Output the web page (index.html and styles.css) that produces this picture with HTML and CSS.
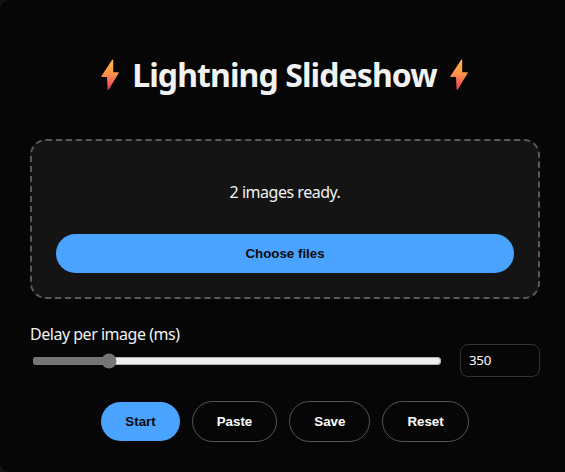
FILE: index.html
```html
<!DOCTYPE html>
<html lang="en">
<head>
<meta charset="utf-8">
<title>Lightning Slideshow</title>
<link rel="stylesheet" href="styles.css">
</head>
<body>
<main class="panel">
  <svg width="0" height="0" class="defs"><defs>
    <linearGradient id="bolt" x1="0" y1="0" x2="0" y2="1"><stop offset="0" stop-color="#ffb84a"/><stop offset=".45" stop-color="#ff9548"/><stop offset="1" stop-color="#ee3d5c"/></linearGradient>
  </defs></svg>
  <h1 class="title">
    <svg class="bolt" viewBox="0 0 18 32"><path fill="url(#bolt)" d="M11.2.7Q12.2.1 12.2 1.2V13.2H17.2Q18.2 13.3 17.6 14.2L7.8 30.5Q6.9 31.3 6.6 30.3L6 18.1H.8Q-.1 17.9.5 17Z"/></svg>
    <span class="title-text">Lightning Slideshow</span>
    <svg class="bolt" viewBox="0 0 18 32"><path fill="url(#bolt)" d="M11.2.7Q12.2.1 12.2 1.2V13.2H17.2Q18.2 13.3 17.6 14.2L7.8 30.5Q6.9 31.3 6.6 30.3L6 18.1H.8Q-.1 17.9.5 17Z"/></svg>
  </h1>
  <section class="drop">
    <p class="status">2 images ready.</p>
    <button class="btn primary">Choose files</button>
  </section>
  <label class="label" for="delay"><span>Delay per image (ms)</span></label>
  <div class="row">
    <input class="range" id="delay" type="range" min="50" max="1770" value="350">
    <input class="number" type="text" value="350">
  </div>
  <div class="actions">
    <button class="btn primary">Start</button>
    <button class="btn ghost">Paste</button>
    <button class="btn ghost">Save</button>
    <button class="btn ghost">Reset</button>
  </div>
</main>
</body>
</html>
```
FILE: styles.css
```css
* { box-sizing: border-box; }
html { background: #111; }
body { margin: 0; height: 472px; overflow: hidden; color: #f2f2f2; font: 16px/21px "Noto Sans", "Open Sans", sans-serif; }
.panel { height: 472px; padding: 54px 25px 0 30px; background: #060606; border-radius: 10px 0 0 10px; }
.defs { position: absolute; }
.title { display: flex; justify-content: center; align-items: center; gap: 13px; height: 43px; margin: 0 0 42px; padding-right: 1px; font-size: 32px; line-height: 43px; }
.title-text { letter-spacing: -0.9px; white-space: nowrap; margin-top: -2px; }
.bolt { width: 18px; height: 32px; flex: none; margin-bottom: 2px; }
.drop { height: 160px; padding: 41px 24px 0; border: 2px dashed #5a5a5a; border-radius: 16px; background: #141414; }
.status { margin: 0 0 31px; text-align: center; letter-spacing: -0.48px; }
.btn { height: 39px; border: 0; border-radius: 999px; padding: 0 24px; font: bold 13.333px "Liberation Sans", Arial, sans-serif; }
.primary { background: #4aa3ff; color: #0b0b0b; }
.drop .btn { display: block; width: 100%; }
.ghost { height: 41px; border: 1px solid #555; background: transparent; color: #fff; }
.label { display: block; margin-top: 25px; letter-spacing: -0.48px; }
.row { display: flex; align-items: center; justify-content: space-between; height: 33px; margin-top: -1px; }
.range { width: 410px; height: 16px; margin: 0 0 0 2px; accent-color: #767676; }
.number { width: 80px; height: 33px; border: 1px solid #333; border-radius: 8px; background: #060606; color: #fff; padding: 0 8px 2px; font: 13.333px "Noto Sans", sans-serif; letter-spacing: -0.3px; }
.actions { display: flex; justify-content: center; align-items: center; gap: 12px; margin-top: 24px; }
```
